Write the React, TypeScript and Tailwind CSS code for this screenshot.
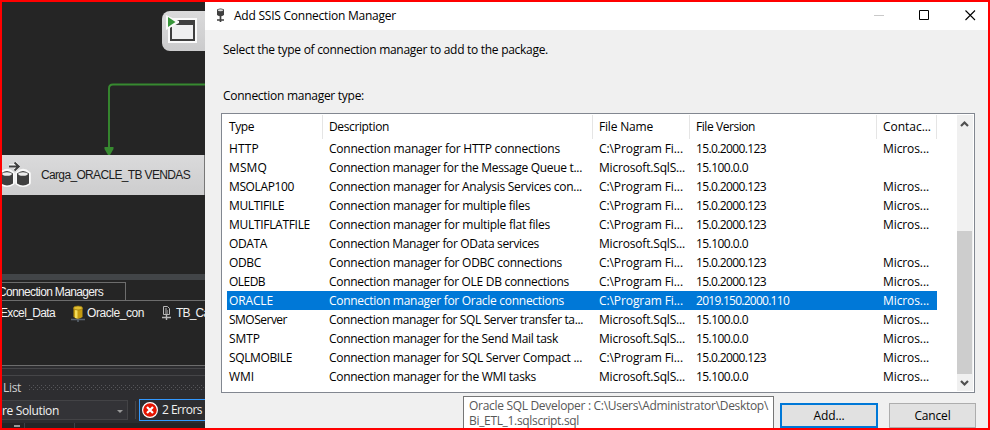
import React, { useLayoutEffect, useRef, useState } from "react";

/** Text tracked so that its line is exactly `w` pixels wide. */
function Fit({ w, children, className = "" }: { w: number; children: string; className?: string }) {
  const ref = useRef<HTMLSpanElement>(null);
  const [ls, setLs] = useState(0);
  useLayoutEffect(() => {
    const el = ref.current;
    if (!el) return;
    el.style.letterSpacing = "0px";
    const natural = el.getBoundingClientRect().width;
    const next = (w - natural) / children.length;
    el.style.letterSpacing = `${next}px`;
    setLs(next);
  }, [w, children]);
  return (
    <span ref={ref} className={`inline-block whitespace-pre ${className}`} style={{ letterSpacing: `${ls}px` }}>
      {children}
    </span>
  );
}

const PF: [string, number] = ["C:\\Program Fi...", 84];
const MS: [string, number] = ["Microsoft.SqlS...", 86];
const V15: [string, number] = ["15.0.2000.123", 70];
const V100: [string, number] = ["15.100.0.0", 52];

type Row = { type: [string, number]; desc: [string, number]; file: [string, number]; ver: [string, number]; contact: boolean; selected?: boolean };

const rows: Row[] = [
  { type: ["HTTP", 30], desc: ["Connection manager for HTTP connections", 231], file: PF, ver: V15, contact: true },
  { type: ["MSMQ", 38], desc: ["Connection manager for the Message Queue t...", 253], file: MS, ver: V100, contact: false },
  { type: ["MSOLAP100", 65], desc: ["Connection manager for Analysis Services con...", 253], file: PF, ver: V15, contact: true },
  { type: ["MULTIFILE", 55], desc: ["Connection manager for multiple files", 201], file: PF, ver: V15, contact: true },
  { type: ["MULTIFLATFILE", 81], desc: ["Connection manager for multiple flat files", 221], file: PF, ver: V15, contact: true },
  { type: ["ODATA", 38], desc: ["Connection Manager for OData services", 210], file: MS, ver: V100, contact: false },
  { type: ["ODBC", 32], desc: ["Connection manager for ODBC connections", 233], file: PF, ver: V15, contact: true },
  { type: ["OLEDB", 36], desc: ["Connection manager for OLE DB connections", 240], file: PF, ver: V15, contact: true },
  { type: ["ORACLE", 44], desc: ["Connection manager for Oracle connections", 235], file: PF, ver: ["2019.150.2000.110", 93], contact: true, selected: true },
  { type: ["SMOServer", 58], desc: ["Connection manager for SQL Server transfer ta...", 254], file: MS, ver: V100, contact: true },
  { type: ["SMTP", 31], desc: ["Connection manager for the Send Mail task", 229], file: MS, ver: V100, contact: true },
  { type: ["SQLMOBILE", 63], desc: ["Connection manager for SQL Server Compact ...", 253], file: PF, ver: V15, contact: true },
  { type: ["WMI", 25], desc: ["Connection manager for the WMI tasks", 207], file: MS, ver: V100, contact: true },
];

function Canvas() {
  return (
    <div className="h-[272px] shrink-0 bg-[#252525]">
      <div className="flex h-[153px]">
        <svg width="203" height="153" viewBox="2 2 203 153">
          <defs>
            <linearGradient id="node" x1="0" y1="0" x2="0" y2="1">
              <stop offset="0" stopColor="#dadadb" />
              <stop offset="1" stopColor="#cbcbcc" />
            </linearGradient>
          </defs>
          <rect x="162" y="11" width="60" height="40" rx="8" fill="url(#node)" />
          <path d="M168 18H197V43H168V29H166V17Z" fill="#fafafa" />
          <rect x="170" y="20" width="25" height="21" fill="#3f3f3f" />
          <rect x="172" y="25" width="21" height="14" fill="#efeff0" />
          <path d="M166 15L179 21V23L166 30Z" fill="#fafafa" />
          <path d="M168 17L175.500 22L168 27Z" fill="#38963a" />
          <path d="M205 84.500H113Q109 84.500 109 88.500V150" fill="none" stroke="#378a30" strokeWidth="1.900" />
          <path d="M104.500 147H113.500V149L110 155H108L104.500 149Z" fill="#378a30" />
        </svg>
      </div>
      <div className="flex h-10 items-center border-r border-[#777] bg-linear-to-b from-[#dadadb] to-[#cdcdce] font-['Liberation_Sans',sans-serif] text-[12px] text-[#1c1c1c]">
        <svg width="39" height="40" viewBox="2 155 39 40" className="shrink-0">
          <g stroke="#fafafa" strokeWidth="3.600" fill="#fafafa" strokeLinejoin="round">
            <path d="M9 166H18M14.500 162.500L18.500 166.500L14.500 170.500" />
            <path d="M1 173.500Q7 168 13 173.500V183Q7 187.500 1 183ZM17 173.500Q23 168 29 173.500V183Q23 187.500 17 183Z" />
          </g>
          <path d="M9 166.500H18.500M14.500 162.500L18.800 166.500L14.500 170.500" fill="none" stroke="#3f3f3f" strokeWidth="2" />
          <path d="M1 173.500Q7 168.500 13 173.500V183.500Q7 187.500 1 183.500ZM17 173.500Q23 168.500 29 173.500V183.500Q23 187.500 17 183.500Z" fill="#3f3f3f" />
          <ellipse cx="7" cy="174" rx="4.800" ry="1.800" fill="#ececec" />
          <ellipse cx="23" cy="174" rx="4.800" ry="1.800" fill="#ececec" />
        </svg>
        <Fit w={149}>Carga_ORACLE_TB VENDAS</Fit>
      </div>
    </div>
  );
}

function ConnectionTray() {
  return (
    <div className="shrink-0 font-['Liberation_Sans',sans-serif]">
      <div className="h-1.5 bg-[#424548]" />
      <div className="flex h-[21px] items-end overflow-hidden border-b border-[#6d6d6d] bg-[#252525] pt-0.5">
        <div className="flex h-[18px] w-[124px] items-center border-t border-r border-[#6d6d6d]">
          <Fit w={105} className="-ml-1 shrink-0">Connection Managers</Fit>
        </div>
      </div>
      <div className="flex h-[65px] items-start overflow-hidden border-b border-[#6d6d6d] bg-[#252525] pt-1">
        <Fit w={55} className="-ml-0.5 shrink-0">Excel_Data</Fit>
        <svg width="14" height="17" viewBox="0 0 14 17" className="ml-4 shrink-0">
          <path d="M0 14.500H14M7 12V17" stroke="#5b6570" strokeWidth="1.500" />
          <path d="M2.500 3V12Q7 15.500 11.500 12V3Z" fill="#c59b10" />
          <path d="M4 4V13L6.500 13.500V4Z" fill="#f3dc59" />
          <ellipse cx="7" cy="3" rx="4.500" ry="2" fill="#e0bd31" stroke="#94760b" strokeWidth=".7" />
        </svg>
        <Fit w={57} className="ml-0.5 shrink-0">Oracle_con</Fit>
        <svg width="9" height="15" viewBox="0 0 9 15" className="mt-px ml-[18px] shrink-0">
          <path d="M1.500 .5H5.500L7.500 2.500V8.500H1.500ZM3 3H5M3 5H6M3 7H6" fill="none" stroke="#b7b7b7" />
          <path d="M4.500 8.500V14M0 11.500H9" fill="none" stroke="#b7b7b7" strokeWidth="1.400" />
        </svg>
        <Fit w={54} className="ml-[5px] shrink-0">TB_Carga_</Fit>
      </div>
    </div>
  );
}

function ErrorList() {
  return (
    <div className="flex h-[62px] flex-col bg-[#2d2d30]">
      <div className="mt-0.5 h-[8px] shrink-0 border-y border-[#454548]" />
      <div className="flex h-[23px] shrink-0 items-center pl-px">
        <Fit w={18} className="text-[#d0d0d0]">List</Fit>
        <svg width="176" height="6" className="ml-2">
          <defs>
            <pattern id="grip" width="4" height="4" patternUnits="userSpaceOnUse">
              <path d="M0 0h1v1h-1zM2 2h1v1h-1z" fill="#56565a" />
            </pattern>
          </defs>
          <rect width="176" height="5" fill="url(#grip)" />
        </svg>
      </div>
      <div className="flex h-[22px] shrink-0 items-center">
        <div className="flex h-5 w-[126px] shrink-0 items-center justify-between border border-l-0 border-[#434346] bg-[#333337] pt-0.5 pr-1">
          <Fit w={57}>re Solution</Fit>
          <span className="h-0 w-0 border-x-[3px] border-t-[3px] border-x-transparent border-t-[#999]" />
        </div>
        <div className="ml-[7px] h-[18px] w-px shrink-0 bg-[#464649]" />
        <div className="ml-[3px] flex h-[22px] w-[70px] shrink-0 items-center border border-r-0 border-[#3399ff] pl-0.5">
          <svg width="16" height="16" viewBox="0 0 16 16">
            <circle cx="8" cy="8" r="7.400" fill="#e51400" stroke="#fff" strokeWidth="1.200" />
            <path d="M5 5L11 11M11 5L5 11" stroke="#fff" strokeWidth="2.200" />
          </svg>
          <Fit w={40} className="ml-1">2 Errors</Fit>
        </div>
      </div>
      <div className="mt-0.5 flex min-h-0 flex-1 bg-[#252526]">
        <div className="w-[23px] border-r border-[#3f3f46] pt-0.5 pl-3"><div className="h-0.5 w-1.5 bg-[#999]" /></div>
        <div className="w-[50px] border-r border-[#3f3f46]" />
      </div>
    </div>
  );
}

function Cell({ t, width }: { t?: [string, number]; width: string }) {
  return <div className={`shrink-0 ${width}`}>{t && <Fit w={t[1]}>{t[0]}</Fit>}</div>;
}

function TypeList() {
  return (
    <div className="ml-4 flex h-[280px] w-[754px] shrink-0 border border-[#828790] bg-white">
      <div className="flex-1 overflow-hidden pt-px pl-[5px]">
        <div className="flex h-6 w-[710px] leading-6">
          <div className="w-[96px] border-r border-[#e5e5e5] pl-0.5"><Fit w={25}>Type</Fit></div>
          <div className="w-[270px] border-r border-[#e5e5e5] pl-1.5"><Fit w={60}>Description</Fit></div>
          <div className="w-[97px] border-r border-[#e5e5e5] pl-1.5"><Fit w={54}>File Name</Fit></div>
          <div className="w-[187px] border-r border-[#e5e5e5] pl-1.5"><Fit w={59}>File Version</Fit></div>
          <div className="w-[60px] border-r border-[#e5e5e5] pl-1.5"><Fit w={48}>Contac...</Fit></div>
        </div>
        {rows.map((r) => (
          <div key={r.type[0]} className={`flex h-[19px] w-[710px] pl-0.5 leading-[19px] ${r.selected ? "bg-[#0078d7] text-white" : ""}`}>
            <Cell t={r.type} width="w-[100px]" />
            <Cell t={r.desc} width="w-[270px]" />
            <Cell t={r.file} width="w-[97px]" />
            <Cell t={r.ver} width="w-[187px]" />
            <Cell t={r.contact ? ["Micros...", 46] : undefined} width="w-[50px]" />
          </div>
        ))}
      </div>
      <div className="mt-px mr-px mb-px flex w-4 shrink-0 flex-col items-center bg-[#f0f0f0]">
        <svg width="16" height="17" viewBox="0 0 16 17"><path d="M4 11L7.500 7.500L11 11" fill="none" stroke="#505050" strokeWidth="2.200" /></svg>
        <div className="mt-[99px] h-[143px] w-[15px] self-start bg-[#cdcdcd]" />
        <svg width="16" height="17" viewBox="0 0 16 17"><path d="M4 7L7.500 10.500L11 7" fill="none" stroke="#505050" strokeWidth="2.200" /></svg>
      </div>
    </div>
  );
}

function Dialog() {
  return (
    <div className="flex w-[783px] shrink-0 flex-col bg-[#f0f0f0] text-black">
      <div className="flex h-7 shrink-0 items-center bg-white pl-[11px]">
        <svg width="9" height="14" viewBox="0 0 9 14" className="-mt-0.5">
          <path d="M1 1.500Q4.500 -.5 8 1.500V7Q4.500 9.500 1 7Z" fill="#404040" />
          <ellipse cx="4.500" cy="2.300" rx="2.700" ry="1" fill="#ddd" />
          <path d="M4.500 8V14M1 12H8" stroke="#404040" strokeWidth="1.700" />
        </svg>
        <Fit w={162} className="ml-[9px]">Add SSIS Connection Manager</Fit>
        <div className="flex-1" />
        <svg width="114" height="12" viewBox="0 0 114 12" fill="none" className="mb-[3px]">
          <path d="M0 6.500H10" stroke="#c9c9c9" />
          <path d="M45.500 1.500H54.500V10.500H45.500Z" stroke="#000" />
          <path d="M91.500 1.500L101 11M101 1.500L91.500 11" stroke="#000" strokeWidth="1.100" />
        </svg>
      </div>
      <div className="h-[40px] shrink-0 pl-[18px] leading-[40px]"><Fit w={325}>Select the type of connection manager to add to the package.</Fit></div>
      <div className="h-[43px] shrink-0 pt-[17px] pl-[18px] leading-[18px]"><Fit w={141}>Connection manager type:</Fit></div>
      <TypeList />
      <div className="flex min-h-0 flex-1 overflow-hidden pl-[258px]">
        <div className="mt-[3px] flex w-[311px] shrink-0 flex-col items-start border border-b-0 border-[#767676] bg-white pt-px pl-[5px] leading-[15px] text-[#575757]">
          <Fit w={299}>{"Oracle SQL Developer : C:\\Users\\Administrator\\Desktop\\"}</Fit>
          <Fit w={110}>Bi_ETL_1.sqlscript.sql</Fit>
        </div>
        <div className="mt-2.5 ml-1.5 flex h-[25px] w-[98px] shrink-0 items-center justify-center border-2 border-[#0078d7] bg-[#e1e1e1]"><Fit w={31}>Add...</Fit></div>
        <div className="mt-2.5 ml-[11px] flex h-[25px] w-[87px] shrink-0 items-center justify-center border border-[#adadad] bg-[#e1e1e1]"><Fit w={36}>Cancel</Fit></div>
      </div>
    </div>
  );
}

export default function App() {
  return (
    <div className="flex h-[430px] w-[990px] overflow-hidden border-2 border-[#ff0000] font-['Open_Sans','Noto_Sans',sans-serif] text-[12px] leading-4">
      <div className="flex w-[203px] shrink-0 flex-col overflow-hidden bg-[#252525] text-[#f1f1f1]">
        <Canvas />
        <ConnectionTray />
        <ErrorList />
      </div>
      <Dialog />
    </div>
  );
}
